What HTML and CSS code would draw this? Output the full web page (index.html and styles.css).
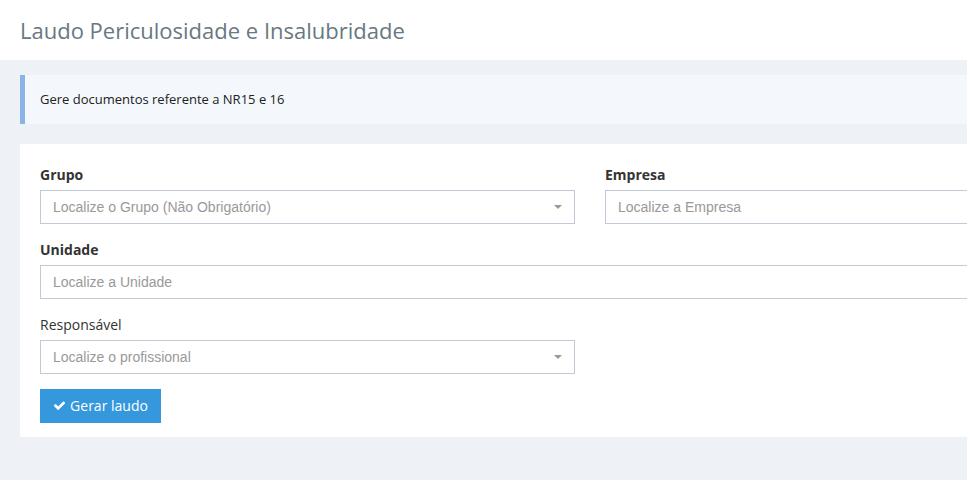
FILE: index.html
```html
<!DOCTYPE html>
<html lang="pt">
<head>
<meta charset="utf-8">
<title>Laudo Periculosidade e Insalubridade</title>
<link rel="stylesheet" href="styles.css">
</head>
<body>
<div class="page">
  <header class="page-header">
    <h1 class="page-title">Laudo Periculosidade e Insalubridade</h1>
  </header>
  <main class="content">
    <div class="alert">Gere documentos referente a NR15 e 16</div>
    <section class="card">
      <div class="row">
        <div class="form-group col">
          <label class="label bold">Grupo</label>
          <div class="select">
            <span class="placeholder">Localize o Grupo (Não Obrigatório)</span>
            <span class="caret"></span>
          </div>
        </div>
        <div class="form-group col">
          <label class="label bold">Empresa</label>
          <div class="input"><span class="placeholder">Localize a Empresa</span></div>
        </div>
      </div>
      <div class="form-group">
        <label class="label bold">Unidade</label>
        <div class="input"><span class="placeholder">Localize a Unidade</span></div>
      </div>
      <div class="row">
        <div class="form-group col">
          <label class="label">Responsável</label>
          <div class="select">
            <span class="placeholder">Localize o profissional</span>
            <span class="caret"></span>
          </div>
        </div>
        <div class="col"></div>
      </div>
      <button class="btn" type="button">
        <svg class="check" viewBox="0 0 1792 1792" width="13" height="13"><path fill="#fff" d="M1671 566q0 40-28 68l-724 724-136 136q-28 28-68 28t-68-28l-136-136-362-362q-28-28-28-68t28-68l136-136q28-28 68-28t68 28l294 295 656-657q28-28 68-28t68 28l136 136q28 28 28 68z"/></svg>
        Gerar laudo
      </button>
    </section>
  </main>
</div>
</body>
</html>
```

FILE: styles.css
```css
html, body {
  margin: 0;
  padding: 0;
  overflow: hidden;
  background: #eef1f6;
}
body {
  font-family: "Open Sans", "Liberation Sans", sans-serif;
  color: #333;
  height: 480px;
}
.page {
  width: 1180px;
}
.page-header {
  background: #fff;
  height: 60px;
  display: flex;
  align-items: center;
  padding: 0 20px;
}
.page-title {
  margin: 0;
  font-weight: 400;
  font-size: 22px;
  color: #697882;
  letter-spacing: 0;
}
.content {
  padding: 15px 20px 0 20px;
}
.alert {
  background: #f4f7fb;
  border-left: 5px solid #8ab4e6;
  height: 49px;
  box-sizing: border-box;
  display: flex;
  align-items: center;
  padding-left: 15px;
  padding-bottom: 2px;
  font-size: 13px;
  color: #222;
}
.card {
  background: #fff;
  margin-top: 20px;
  padding: 20px 20px 14px 20px;
}
.row {
  display: flex;
  gap: 30px;
}
.col {
  flex: 1 1 0;
}
.form-group {
  margin-bottom: 15px;
}
.label {
  display: block;
  height: 20px;
  line-height: 20px;
  padding-top: 1px;
  margin-bottom: 5px;
  font-size: 14px;
  color: #333;
}
.label.bold {
  font-weight: 700;
}
.input, .select {
  height: 34px;
  box-sizing: border-box;
  border: 1px solid #c2cad8;
  background: #fff;
  display: flex;
  align-items: center;
  padding: 0 12px 1px 12px;
}
.select {
  justify-content: space-between;
}
.placeholder {
  font-family: "Liberation Sans", Arial, sans-serif;
  font-size: 14px;
  color: #999;
}
.caret {
  width: 0;
  height: 0;
  border-left: 4px solid transparent;
  border-right: 4px solid transparent;
  border-top: 4px solid #999;
}
.btn {
  display: inline-flex;
  align-items: center;
  gap: 4px;
  height: 34px;
  width: 121px;
  justify-content: center;
  border: 0;
  background: #3598dc;
  color: #fff;
  font-family: "Open Sans", "Liberation Sans", sans-serif;
  font-size: 14px;
  padding: 0 12px 1px 12px;
  cursor: pointer;
}
.check {
  display: block;
}
```
